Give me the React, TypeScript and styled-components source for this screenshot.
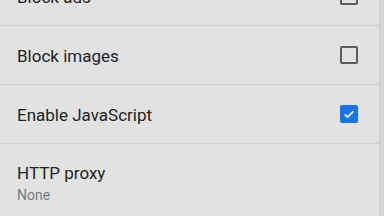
import React from 'react';
import styled, { createGlobalStyle } from 'styled-components';

const GlobalStyle = createGlobalStyle`
  html, body {
    margin: 0;
    padding: 0;
    background: #e2e2e2;
    overflow: hidden;
  }
  body {
    font-family: Roboto, 'Noto Sans', sans-serif;
  }
`;

const Screen = styled.div`
  display: flex;
  width: 384px;
  height: 216px;
  overflow: hidden;
  background: #e2e2e2;
`;

const List = styled.div`
  flex: 1;
  display: flex;
  flex-direction: column;
  margin-top: -33px;
`;

const ScrollEdge = styled.div`
  width: 4px;
  background: #d6d6d6;
  border-left: 1px solid #cdcdcd;
`;

const Row = styled.div<{ $tall?: boolean }>`
  display: flex;
  align-items: center;
  flex-shrink: 0;
  min-height: 59px;
  padding: ${p => (p.$tall ? '19px 20px 16px 17px' : '0 21px 0 17px')};
  box-sizing: border-box;
  border-bottom: 1px solid #cfcfcf;
`;

const Texts = styled.div<{ $tall?: boolean }>`
  flex: 1;
  display: flex;
  flex-direction: column;
  padding-top: ${p => (p.$tall ? '0' : '2px')};
`;

const Title = styled.div`
  font-size: 17px;
  color: #232323;
  line-height: 20px;
`;

const Summary = styled.div`
  font-size: 14px;
  color: #7a7a7a;
  line-height: 20px;
  margin-top: 2px;
`;

const Box = styled.div<{ $checked?: boolean }>`
  width: 18px;
  height: 18px;
  box-sizing: border-box;
  border-radius: 2px;
  border: 2px solid ${p => (p.$checked ? '#1a73e8' : '#5c5c5c')};
  background: ${p => (p.$checked ? '#1a73e8' : 'transparent')};
  display: flex;
  align-items: center;
  justify-content: center;
`;

function Checkbox({ checked }: { checked?: boolean }) {
    return (
        <Box $checked={checked}>
            {checked && (
                <svg width="14" height="14" viewBox="0 0 14 14">
                    <path d="M2.8 7.4 L5.6 10 L11.4 4.3" fill="none" stroke="#fff" strokeWidth="1.7" />
                </svg>
            )}
        </Box>
    );
}

const settings = [
    { title: 'Block ads', checkbox: true, checked: false },
    { title: 'Block images', checkbox: true, checked: false },
    { title: 'Enable JavaScript', checkbox: true, checked: true },
    { title: 'HTTP proxy', summary: 'None', checkbox: false },
];

export default function App() {
    return (
        <Screen>
            <GlobalStyle />
            <List>
                {settings.map((s, idx) => (
                    <Row key={`setting-${idx}`} $tall={!!s.summary}>
                        <Texts $tall={!!s.summary}>
                            <Title>{s.title}</Title>
                            {s.summary && <Summary>{s.summary}</Summary>}
                        </Texts>
                        {s.checkbox && <Checkbox checked={s.checked} />}
                    </Row>
                ))}
            </List>
            <ScrollEdge />
        </Screen>
    );
}
